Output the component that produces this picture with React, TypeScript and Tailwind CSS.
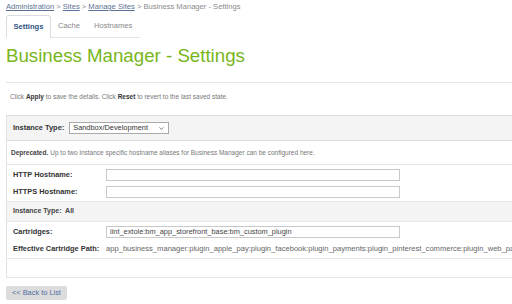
import { ChevronDown } from "lucide-react";

const label = "text-[7.4px] font-bold text-[#333] whitespace-nowrap";

function Field({ name, value }: { name: string; value?: string }) {
  return (
    <div className="flex items-center h-[17px]">
      <div className={`w-[99px] shrink-0 pl-[6px] ${label}`}>{name}</div>
      <div className="w-[294px] h-[12px] border border-[#c8c8c8] bg-white px-[3px] text-[7.4px] leading-[10px] text-[#444] whitespace-nowrap overflow-hidden">
        {value}
      </div>
    </div>
  );
}

export default function App() {
  return (
    <div
      className="w-[512px] h-[304px] overflow-hidden bg-white text-[#555]"
      style={{ fontFamily: '"Liberation Sans", Arial, sans-serif' }}
    >
      <div className="pl-[6px]">
        {/* breadcrumb */}
        <div className="pt-[2px] h-[16px] text-[7.6px] leading-[10px] text-[#8a8a8a] whitespace-nowrap">
          <a className="underline text-[#5c7294]">Administration</a> &gt;{" "}
          <a className="underline text-[#5c7294]">Sites</a> &gt;{" "}
          <a className="underline text-[#5c7294]">Manage Sites</a> &gt; Business Manager - Settings
        </div>

        {/* tabs */}
        <div className="flex items-end h-[22px] w-[134px] border-b border-[#e3e3e3]">
          <div className="h-[23px] -mb-px w-[45px] flex items-center justify-center border border-b-0 border-[#dcdcdc] rounded-t-[3px] bg-white text-[7.6px] font-bold text-[#2f5383]">
            Settings
          </div>
          <div className="h-[22px] flex items-center pl-[7px] text-[7.6px] text-[#888]">Cache</div>
          <div className="h-[22px] flex items-center pl-[14px] text-[7.6px] text-[#888]">Hostnames</div>
        </div>

        {/* title */}
        <div className="mt-[6px] h-[24px] leading-[24px] text-[18.7px] text-[#79b51c] whitespace-nowrap">
          Business Manager - Settings
        </div>

        <div className="mt-[14px] border-t border-[#e6e6e6]" />

        <div className="pt-[9px] pl-[4px] h-[32px] text-[6.5px] leading-[10px] text-[#777] whitespace-nowrap">
          Click <b className="text-[#333]">Apply</b> to save the details. Click <b className="text-[#333]">Reset</b> to revert to the last saved state.
        </div>

        {/* form box */}
        <div className="w-[520px] border-l border-[#e2e2e2]">
          <div className="h-[26px] flex items-center gap-[5px] pl-[6px] bg-[#f4f4f4] border-y border-[#e0e0e0]">
            <span className={label}>Instance Type:</span>
            <div className="w-[100px] h-[12px] border border-[#a9a9a9] bg-white flex items-center justify-between pl-[3px] pr-[3px] text-[7.4px] text-[#333]">
              <span>Sandbox/Development</span>
              <ChevronDown size={7} strokeWidth={2.5} className="text-[#555]" />
            </div>
          </div>

          <div className="h-[24px] flex items-center pl-[4px] border-b border-[#e6e6e6] text-[6.5px] text-[#777] whitespace-nowrap">
            <b className="text-[#444] mr-[2px]">Deprecated.</b> Up to two instance specific hostname aliases for Business Manager can be configured here.
          </div>

          <div className="py-[1px]">
            <Field name="HTTP Hostname:" />
            <Field name="HTTPS Hostname:" />
          </div>

          <div className="h-[21px] flex items-center pl-[6px] bg-[#f4f4f4] border-y border-[#e6e6e6]">
            <span className="text-[7px] font-bold text-[#444]">Instance Type:&nbsp; All</span>
          </div>

          <div className="pt-[1px]">
            <Field name="Cartridges:" value="iint_extole:bm_app_storefront_base:bm_custom_plugin" />
            <div className="flex items-center h-[18px]">
              <div className={`w-[99px] shrink-0 pl-[6px] ${label}`}>Effective Cartridge Path:</div>
              <div className="w-[412px] overflow-hidden text-[7.6px] text-[#666] whitespace-nowrap">
                app_business_manager:plugin_apple_pay:plugin_facebook:plugin_payments:plugin_pinterest_commerce:plugin_web_payments
              </div>
            </div>
          </div>

          <div className="h-[20px] border-y border-[#e6e6e6]" />
        </div>

        <button className="mt-[8px] h-[14px] px-[6px] rounded-[2px] bg-[#dcdcdc] text-[7.4px] leading-[14px] text-[#4e6e9e]">
          &lt;&lt; Back to List
        </button>
      </div>
    </div>
  );
}
